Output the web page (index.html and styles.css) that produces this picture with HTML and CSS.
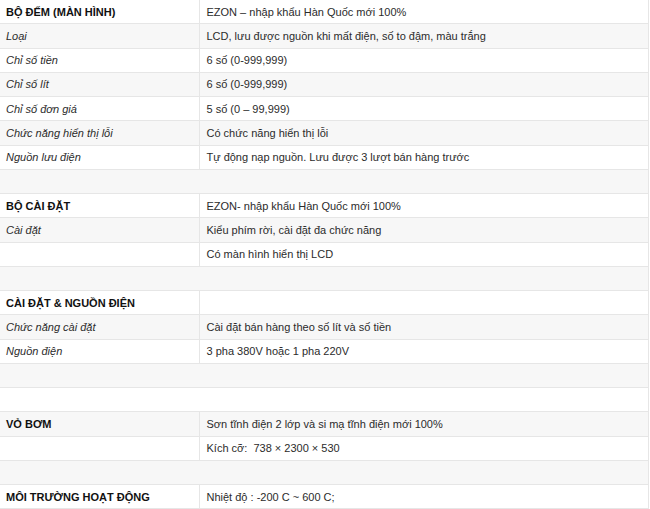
FILE: index.html
```html
<!DOCTYPE html>
<html lang="vi">
<head>
<meta charset="utf-8">
<title>Thông số kỹ thuật</title>
<link rel="stylesheet" href="styles.css">
</head>
<body>
<table class="spec">
  <colgroup><col class="c1"><col class="c2"></colgroup>
  <tbody>
    <tr><td class="head">BỘ ĐẾM (MÀN HÌNH)</td><td>EZON – nhập khẩu Hàn Quốc mới 100%</td></tr>
    <tr><td class="label">Loại</td><td>LCD, lưu được nguồn khi mất điện, số to đậm, màu trắng</td></tr>
    <tr><td class="label">Chỉ số tiền</td><td>6 số (0-999,999)</td></tr>
    <tr><td class="label">Chỉ số lít</td><td>6 số (0-999,999)</td></tr>
    <tr><td class="label">Chỉ số đơn giá</td><td>5 số (0 – 99,999)</td></tr>
    <tr><td class="label">Chức năng hiển thị lỗi</td><td>Có chức năng hiển thị lỗi</td></tr>
    <tr><td class="label">Nguồn lưu điện</td><td>Tự động nạp nguồn. Lưu được 3 lượt bán hàng trước</td></tr>
    <tr class="empty"><td colspan="2"></td></tr>
    <tr><td class="head">BỘ CÀI ĐẶT</td><td>EZON- nhập khẩu Hàn Quốc mới 100%</td></tr>
    <tr><td class="label">Cài đặt</td><td>Kiểu phím rời, cài đặt đa chức năng</td></tr>
    <tr><td></td><td>Có màn hình hiển thị LCD</td></tr>
    <tr class="empty"><td colspan="2"></td></tr>
    <tr><td class="head">CÀI ĐẶT &amp; NGUỒN ĐIỆN</td><td></td></tr>
    <tr><td class="label">Chức năng cài đặt</td><td>Cài đặt bán hàng theo số lít và số tiền</td></tr>
    <tr><td class="label">Nguồn điện</td><td>3 pha 380V hoặc 1 pha 220V</td></tr>
    <tr class="empty"><td colspan="2"></td></tr>
    <tr class="empty"><td colspan="2"></td></tr>
    <tr><td class="head">VỎ BƠM</td><td>Sơn tĩnh điện 2 lớp và si mạ tĩnh điện mới 100%</td></tr>
    <tr><td></td><td>Kích cỡ:&nbsp; 738 × 2300 × 530</td></tr>
    <tr class="empty"><td colspan="2"></td></tr>
    <tr><td class="head">MÔI TRƯỜNG HOẠT ĐỘNG</td><td>Nhiệt độ : -200 C ~ 600 C;</td></tr>
  </tbody>
</table>
</body>
</html>
```

FILE: styles.css
```css
html, body {
  margin: 0;
  padding: 0;
  background: #fff;
}
body {
  font-family: "Liberation Sans", Arial, sans-serif;
  font-size: 11px;
  color: #2b2b2b;
}
.spec {
  width: 649px;
  border-collapse: collapse;
  table-layout: fixed;
  margin-top: -1px;
}
.c1 { width: 199px; }
.spec td {
  height: 24.25px;
  box-sizing: border-box;
  padding: 0 6px;
  border: 1px solid #e6e6e6;
  vertical-align: middle;
  line-height: 14px;
  white-space: nowrap;
}
.spec td:first-child { border-left: none; }
.spec td + td { padding-left: 7px; }
.spec tr:nth-child(even) td { background: #f7f7f7; }
.head {
  font-weight: bold;
  color: #111;
}
.label {
  font-style: italic;
}
```
